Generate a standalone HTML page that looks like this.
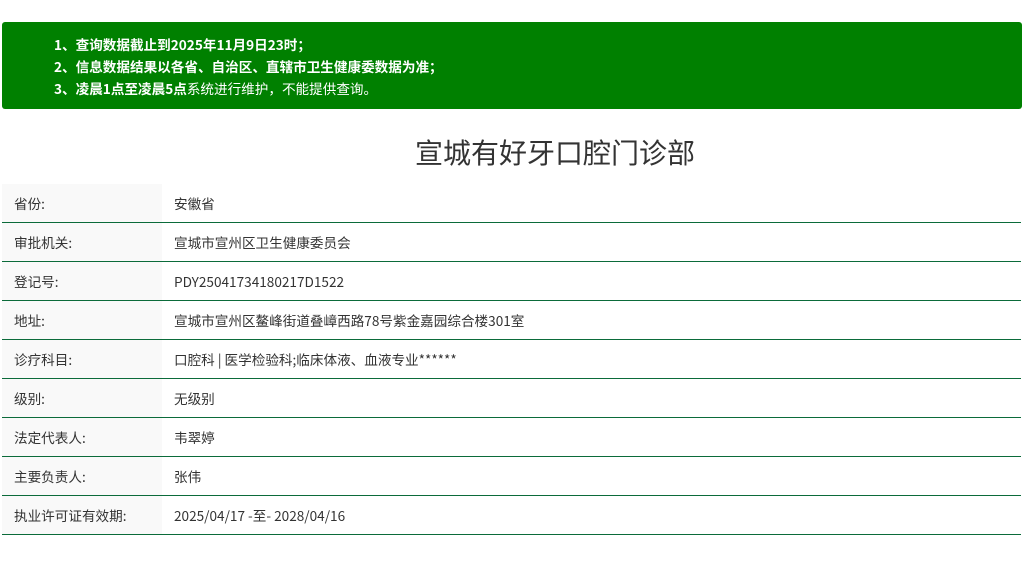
<!DOCTYPE html>
<html><head><meta charset="utf-8"><style>
body{margin:0;background:#fff;font-family:"Noto Sans CJK SC","Liberation Sans",sans-serif;color:#333;width:1022px;height:566px;overflow:hidden;position:relative}
.note{position:absolute;left:2px;top:22px;width:1020px;height:87px;background:#008000;border-radius:3px;color:#fff;font-size:13.6px;box-sizing:border-box;padding:11px 0 0 52px;line-height:22px}
.note b{font-weight:bold}
h1{position:absolute;left:0;top:132px;width:1110px;text-align:center;margin:0;font-size:28px;font-weight:normal;color:#333;line-height:40px}
table{position:absolute;left:2px;top:184px;width:1019px;border-collapse:collapse;font-size:13.6px;line-height:18px}
td{height:38px;border-bottom:1px solid #0b6b3a;padding:0;vertical-align:middle}
td.l{width:160px;background:#f9f9f9;padding-left:12px;box-sizing:border-box}
td.v{padding-left:12px}
</style></head><body>
<div class="note">
<div><b>1、查询数据截止到2025年11月9日23时；</b></div>
<div><b>2、信息数据结果以各省、自治区、直辖市卫生健康委数据为准；</b></div>
<div><b>3、凌晨1点至凌晨5点</b>系统进行维护，不能提供查询。</div>
</div>
<h1>宣城有好牙口腔门诊部</h1>
<table>
<tr><td class="l">省份:</td><td class="v">安徽省</td></tr>
<tr><td class="l">审批机关:</td><td class="v">宣城市宣州区卫生健康委员会</td></tr>
<tr><td class="l">登记号:</td><td class="v">PDY25041734180217D1522</td></tr>
<tr><td class="l">地址:</td><td class="v">宣城市宣州区鳌峰街道叠嶂西路78号紫金嘉园综合楼301室</td></tr>
<tr><td class="l">诊疗科目:</td><td class="v">口腔科 | 医学检验科;临床体液、血液专业******</td></tr>
<tr><td class="l">级别:</td><td class="v">无级别</td></tr>
<tr><td class="l">法定代表人:</td><td class="v">韦翠婷</td></tr>
<tr><td class="l">主要负责人:</td><td class="v">张伟</td></tr>
<tr><td class="l">执业许可证有效期:</td><td class="v">2025/04/17 -至- 2028/04/16</td></tr>
</table>
</body></html>
